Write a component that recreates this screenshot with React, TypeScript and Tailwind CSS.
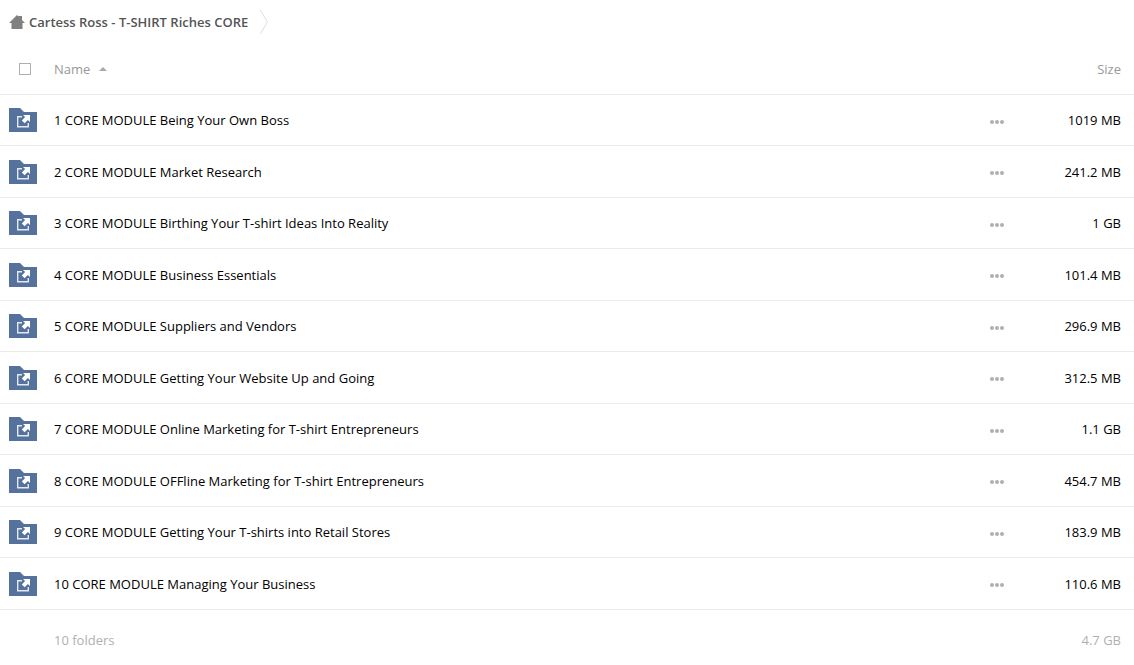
const folders = [
  { name: "1 CORE MODULE Being Your Own Boss", size: "1019 MB" },
  { name: "2 CORE MODULE Market Research", size: "241.2 MB" },
  { name: "3 CORE MODULE Birthing Your T-shirt Ideas Into Reality", size: "1 GB" },
  { name: "4 CORE MODULE Business Essentials", size: "101.4 MB" },
  { name: "5 CORE MODULE Suppliers and Vendors", size: "296.9 MB" },
  { name: "6 CORE MODULE Getting Your Website Up and Going", size: "312.5 MB" },
  { name: "7 CORE MODULE Online Marketing for T-shirt Entrepreneurs", size: "1.1 GB" },
  { name: "8 CORE MODULE OFFline Marketing for T-shirt Entrepreneurs", size: "454.7 MB" },
  { name: "9 CORE MODULE Getting Your T-shirts into Retail Stores", size: "183.9 MB" },
  { name: "10 CORE MODULE Managing Your Business", size: "110.6 MB" },
];

function HomeIcon() {
  return (
    <svg className="block h-4 w-4" viewBox="0 0 16 16" fill="#808080" aria-hidden="true">
      <path d="M8 1 L9.6 2.6 V2 H13 V6 L16 9 H13.5 V15 H2.5 V9 H0 Z" />
    </svg>
  );
}

function FolderIcon() {
  return (
    <svg className="block h-6 w-7" viewBox="0 0 28 24" aria-hidden="true">
      <path d="M0 0 H11 L15 4 H28 V24 H0 Z" fill="#54729b" />
      <path d="M13 8.7 H8.7 V18.8 H19.3 V15" fill="none" stroke="#e4e9f0" strokeWidth="1.4" />
      <path d="M14 7 H21 V14 L18.9 11.9 L15.6 15.2 L12.8 12.4 L16.1 9.1 Z" fill="#fff" />
    </svg>
  );
}

function Dots() {
  return (
    <svg className="block h-1 w-3.5" viewBox="0 0 14 4" fill="#b0b0b0" aria-hidden="true">
      <circle cx="2" cy="2" r="2" />
      <circle cx="7" cy="2" r="2" />
      <circle cx="12" cy="2" r="2" />
    </svg>
  );
}

export default function App() {
  return (
    <main className="bg-white font-['Open_Sans',sans-serif] text-[13px] leading-5 text-black">
      <nav aria-label="Breadcrumb" className="flex h-11 items-center pl-[9px]">
        <a href="#" className="flex items-center gap-1 font-semibold text-[#555]">
          <HomeIcon />
          Cartess Ross - T-SHIRT Riches CORE
        </a>
        <svg className="ml-3 block h-6 w-2" viewBox="0 0 8 24" fill="none" stroke="#ddd" aria-hidden="true">
          <path d="M0.3 0 L7.4 12 L0.3 24" />
        </svg>
      </nav>
      <table className="w-full table-fixed border-separate border-spacing-0 [&_td]:p-0 [&_th]:p-0">
        <colgroup>
          <col className="w-[54px]" />
          <col />
          <col className="w-10" />
          <col className="w-[117px]" />
        </colgroup>
        <thead>
          <tr className="h-[51px] text-[#999] [&>th]:border-b [&>th]:border-[#ebebeb] [&>th]:font-normal">
            <th>
              <input
                type="checkbox"
                aria-label="Select all"
                className="ml-[19px] block h-3 w-3 appearance-none border border-[#b0b0b0] bg-white checked:bg-[#54729b]"
              />
            </th>
            <th className="text-left" aria-sort="ascending">
              <button type="button" className="flex items-center gap-[9px]">
                Name
                <svg className="block h-1 w-2" viewBox="0 0 8 4" fill="#aaa" aria-hidden="true">
                  <path d="M0 4 L4 0 L8 4 Z" />
                </svg>
              </button>
            </th>
            <th />
            <th className="text-right">
              <button type="button" className="mr-[13px]">Size</button>
            </th>
          </tr>
        </thead>
        <tbody>
          {folders.map((f) => (
            <tr
              key={f.name}
              className="odd:h-[51px] even:h-[52px] [&>td]:border-b [&>td]:border-[#ebebeb]"
            >
              <td>
                <div className="pl-[9px]">
                  <FolderIcon />
                </div>
              </td>
              <td>
                <a href="#">{f.name}</a>
              </td>
              <td>
                <button type="button" aria-label="More actions" className="mx-auto block pt-[3px]">
                  <Dots />
                </button>
              </td>
              <td className="text-right">
                <div className="pr-[13px]">{f.size}</div>
              </td>
            </tr>
          ))}
        </tbody>
        <tfoot>
          <tr className="text-[#b0b0b0]">
            <td />
            <td>
              <div className="pt-5">10 folders</div>
            </td>
            <td />
            <td className="text-right">
              <div className="pt-5 pr-[13px]">4.7 GB</div>
            </td>
          </tr>
        </tfoot>
      </table>
    </main>
  );
}
